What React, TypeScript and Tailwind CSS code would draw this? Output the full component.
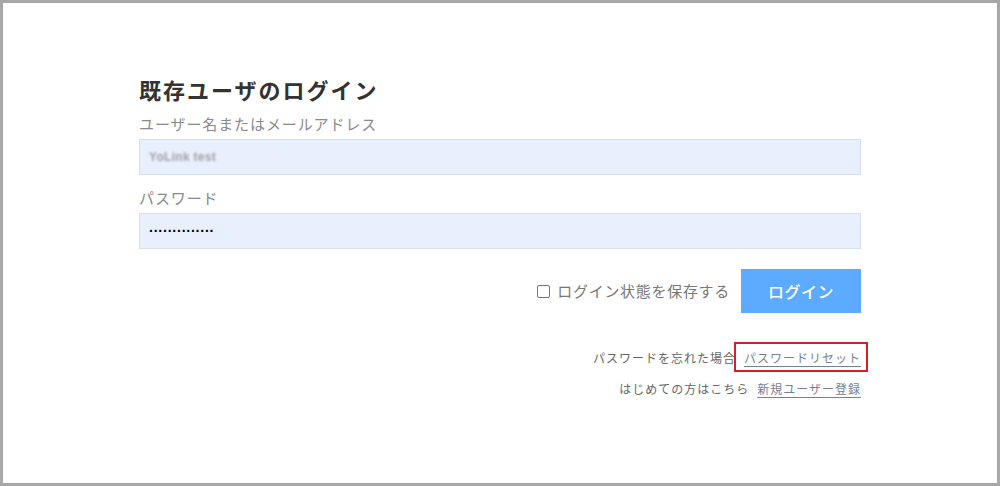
import React from 'react';

const FONT = { fontFamily: '"Noto Sans CJK JP", "Noto Sans", "Liberation Sans", sans-serif' };

export default function App() {
  return (
    <div style={FONT} className="h-[486px] w-[1000px] border-[3px] border-[#a8a8a8] bg-white text-[#333]">
      <div className="mx-auto w-[722px] pt-[70px]">
        <h1 className="text-[22px] font-bold leading-[32px] tracking-[2px] text-[#333]">既存ユーザのログイン</h1>

        <label className="mt-[9px] block text-[15px] leading-[20px] tracking-[0.9px] text-[#8a8a8a]">
          ユーザー名またはメールアドレス
        </label>
        <div className="mt-[5px] flex h-[36px] items-center border border-[#d6dff0] bg-[#e8f0fe] px-[9px]">
          <span className="text-[12px] font-bold tracking-[0.3px] text-[#a0a0a0] blur-[0.8px]" style={{ fontFamily: '"Liberation Sans", sans-serif' }}>
            YoLink test
          </span>
        </div>

        <label className="mt-[13px] block text-[15px] leading-[20px] tracking-[0.9px] text-[#8a8a8a]">パスワード</label>
        <div className="mt-[5px] flex h-[36px] items-center border border-[#d6dff0] bg-[#e8f0fe] px-[9px]">
          <span className="text-[14px] font-bold leading-none text-black" style={{ fontFamily: '"Liberation Sans", sans-serif' }}>
            ··············
          </span>
        </div>

        <div className="mt-[20px] flex items-center justify-end">
          <label className="flex items-center text-[15px] tracking-[0.7px] text-[#777]">
            <span className="mr-[7px] inline-block h-[13px] w-[13px] rounded-[2px] border border-[#767676] bg-white" />
            ログイン状態を保存する
          </label>
          <button className="ml-[11px] h-[44px] w-[120px] bg-[#5cabff] text-[16px] font-medium tracking-[0.5px] text-white">
            ログイン
          </button>
        </div>

        <div className="mt-[36px] flex flex-col items-end gap-[13px] text-[12px] leading-[18px] tracking-[1px] text-[#666]">
          <p>
            パスワードを忘れた場合
            <span className="relative ml-[8px] inline-block">
              <a href="#" className="text-[#74819a] underline underline-offset-[3px]">パスワードリセット</a>
              <span className="pointer-events-none absolute -top-[7px] -bottom-[5px] -left-[10px] -right-[7px] border-2 border-[#d0202a]" />
            </span>
          </p>
          <p>
            はじめての方はこちら
            <a href="#" className="ml-[8px] text-[#74819a] underline underline-offset-[3px]">新規ユーザー登録</a>
          </p>
        </div>
      </div>
    </div>
  );
}
